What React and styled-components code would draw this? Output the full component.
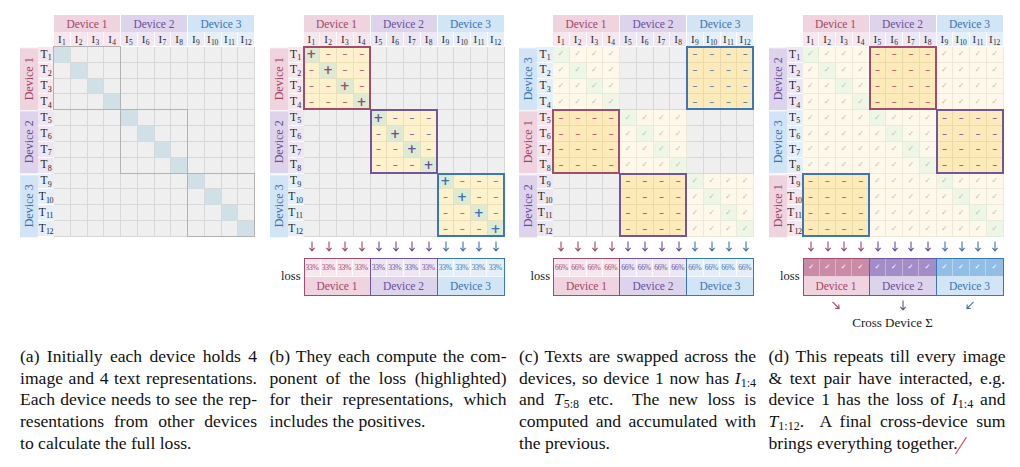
import React from "react";
import styled, { createGlobalStyle } from "styled-components";

const SERIF = `"Liberation Serif", "DejaVu Serif", "Times New Roman", serif`;

const GlobalStyle = createGlobalStyle`
  html, body {
    margin: 0;
    background: #ffffff;
  }
  body {
    font-family: ${SERIF};
    color: #1a1a1a;
  }
`;

// device palette
const DEV = [
  { name: "Device 1", ink: "#a1466a", line: "#a24d6e", head: "#efd3de", soft: "#f7e6ed", strong: "#c98ba6" },
  { name: "Device 2", ink: "#6a4e9c", line: "#71559f", head: "#ddd4ec", soft: "#ece6f5", strong: "#a28dc9" },
  { name: "Device 3", ink: "#3a73b3", line: "#3b76ba", head: "#d2e5f6", soft: "#e4effa", strong: "#92bde5" },
];

const KIND = {
  empty: { bg: "#efefef", line: "#d8d8d8" },
  diag: { bg: "#cfe1e6", line: "#d3dcdf" },
  pos: { bg: "#dcebd2", line: "#e4dfc3" },
  neg: { bg: "#fef2cd", line: "#ebdfb9" },
  dash: { bg: "#fcebb9", line: "#eadaab" },
  check: { bg: "#fdf8ea", line: "#eee8d8" },
  checkDiag: { bg: "#eef6e6", line: "#e3ebda" },
};

const Page = styled.div`
  width: 1020px;
  height: 467px;
  box-sizing: border-box;
  padding: 15px 0 0 20px;
  display: grid;
  grid-template-columns: repeat(4, 235px);
  grid-template-rows: 331px auto;
  column-gap: 14.5px;
  overflow: hidden;
  font-family: ${SERIF};
`;

const Panel = styled.div`
  display: flex;
  flex-direction: column;
  font-family: ${SERIF};
`;

const Matrix = styled.div`
  display: grid;
  grid-template-columns: 18px 16px repeat(12, 16.75px);
  grid-template-rows: 17px 15px repeat(12, 15.83px);
`;

const DevHead = styled.div`
  grid-row: 1;
  grid-column: ${(p) => p.$d * 4 + 3} / span 4;
  background: ${(p) => DEV[p.$d].head};
  color: ${(p) => DEV[p.$d].ink};
  border-right: 1px solid #ffffff;
  font-size: 11.5px;
  display: flex;
  align-items: center;
  justify-content: center;
`;

// label text with a subscript index, kept inline so vertical-align works
const Sym = styled.span`
  white-space: nowrap;
  line-height: 1;

  sub {
    font-size: ${(p) => p.$sub || "7.5px"};
    vertical-align: -2.5px;
    line-height: 0;
    margin-left: 0.5px;
  }
`;

const ILabel = styled.div`
  grid-row: 2;
  grid-column: ${(p) => p.$c + 3};
  background: ${(p) => DEV[p.$d].soft};
  border-right: 1px solid #ffffff;
  border-bottom: 1px solid #ffffff;
  font-size: 11px;
  color: #2c2c2c;
  display: flex;
  align-items: center;
  justify-content: center;
  letter-spacing: -0.2px;
`;

const SideLabel = styled.div`
  grid-column: 1;
  grid-row: ${(p) => p.$rb * 4 + 3} / span 4;
  background: ${(p) => DEV[p.$d].head};
  color: ${(p) => DEV[p.$d].ink};
  border-bottom: 1px solid #ffffff;
  writing-mode: vertical-rl;
  transform: rotate(180deg);
  font-size: 12px;
  display: flex;
  align-items: center;
  justify-content: center;
`;

const TLabel = styled.div`
  grid-column: 2;
  grid-row: ${(p) => p.$r + 3};
  background: ${(p) => DEV[p.$d].soft};
  border-bottom: 1px solid #ffffff;
  font-size: 11.5px;
  color: #1f1f1f;
  display: flex;
  align-items: center;
  justify-content: center;
  letter-spacing: -0.3px;
`;

const Cell = styled.div`
  grid-column: ${(p) => p.$c + 3};
  grid-row: ${(p) => p.$r + 3};
  background: ${(p) => KIND[p.$kind].bg};
  border-right: 1px solid ${(p) => KIND[p.$kind].line};
  border-bottom: 1px solid ${(p) => KIND[p.$kind].line};
  color: ${(p) => p.$ink};
  font-family: "DejaVu Sans", sans-serif;
  font-size: ${(p) => (p.$kind === "pos" ? "12px" : p.$kind.startsWith("check") ? "8px" : "10px")};
  font-weight: ${(p) => (p.$kind === "pos" ? 700 : 400)};
  display: flex;
  align-items: center;
  justify-content: center;
  line-height: 1;
`;

const Outline = styled.div`
  grid-row: ${(p) => p.$rb * 4 + 3} / span 4;
  grid-column: ${(p) => p.$cb * 4 + 3} / span 4;
  border: ${(p) => (p.$thin ? "1px solid #b2b2b2" : `2px solid ${p.$color}`)};
  margin: -1px 0 0 -1px;
  z-index: 1;
  pointer-events: none;
`;

const ArrowRow = styled.div`
  display: grid;
  grid-template-columns: repeat(12, 16.75px);
  margin: 4px 0 0 34px;
  height: 12px;
  justify-items: center;
  align-items: center;
`;

const LossRow = styled.div`
  display: grid;
  grid-template-columns: 34px 201px;
  margin-top: 5px;
`;

const LossLabel = styled.div`
  align-self: center;
  text-align: right;
  padding-right: 3px;
  font-size: 12.5px;
  color: #1a1a1a;
`;

const Bar = styled.div`
  display: grid;
  grid-template-columns: repeat(3, 1fr);
`;

const BarSection = styled.div`
  display: grid;
  grid-template-columns: repeat(4, 1fr);
  grid-template-rows: 18px 18px;
  border: 1px solid ${(p) => DEV[p.$d].line};
  margin-left: ${(p) => (p.$d ? "-1px" : "0")};
`;

const BarCell = styled.div`
  background: ${(p) => (p.$strong ? DEV[p.$d].strong : DEV[p.$d].soft)};
  color: ${(p) => (p.$strong ? "#ffffff" : DEV[p.$d].ink)};
  border-right: 1px solid ${(p) => (p.$strong ? "rgba(255,255,255,0.35)" : "rgba(255,255,255,0.9)")};
  border-bottom: 1px solid rgba(255, 255, 255, 0.6);
  font-size: ${(p) => (p.$strong ? "7px" : "7.6px")};
  font-family: ${(p) => (p.$strong ? '"DejaVu Sans", sans-serif' : SERIF)};
  letter-spacing: -0.3px;
  display: flex;
  align-items: center;
  justify-content: center;
  &:nth-child(4) {
    border-right: none;
  }
`;

const BarName = styled.div`
  grid-column: 1 / -1;
  background: ${(p) => DEV[p.$d].head};
  color: ${(p) => DEV[p.$d].ink};
  font-size: 11.5px;
  display: flex;
  align-items: center;
  justify-content: center;
`;

const SumArrows = styled.div`
  display: grid;
  grid-template-columns: repeat(3, 67px);
  margin: 4px 0 0 34px;
  height: 12px;
  justify-items: center;
  align-items: center;
`;

const SumLabel = styled.div`
  margin: 3px 0 0 34px;
  width: 180px;
  text-align: center;
  font-size: 13px;
  color: #1a1a1a;
`;

const Caption = styled.div`
  width: 237px;
  font-family: ${SERIF};
  font-size: 17.6px;
  line-height: 21.7px;
  color: #111111;
`;

const Line = styled.div`
  text-align: ${(p) => (p.$last ? "left" : "justify")};
  text-align-last: ${(p) => (p.$last ? "left" : "justify")};

  sub {
    font-size: 12px;
    vertical-align: -3px;
    line-height: 0;
  }
`;

const Mark = styled.svg`
  display: inline-block;
  vertical-align: -6px;
  margin-left: -4px;
`;

const Arrow = ({ color, rot = 0 }) => (
  <svg width="8" height="11" viewBox="0 0 8 11" style={{ transform: `rotate(${rot}deg)` }}>
    <path d="M4 0.5 V9.6 M1.4 6.8 L4 9.8 L6.6 6.8" fill="none" stroke={color} strokeWidth="1.1" />
  </svg>
);

const M = ({ v, s }) => (
  <>
    <i>{v}</i>
    <sub>{s}</sub>
  </>
);

const panels = [
  { id: "a", rows: [0, 1, 2] },
  { id: "b", rows: [0, 1, 2], loss: "33%" },
  { id: "c", rows: [2, 0, 1], loss: "66%" },
  { id: "d", rows: [1, 2, 0], loss: "check", sum: true },
];

function cellFor(id, r, c, rows) {
  const rb = Math.floor(r / 4);
  const cb = Math.floor(c / 4);
  if (id === "a") return { kind: r === c ? "diag" : "empty" };
  if (id === "b") {
    if (rb !== cb) return { kind: "empty" };
    return r === c
      ? { kind: "pos", text: "+", ink: DEV[rb].ink }
      : { kind: "neg", text: "–", ink: DEV[rb].ink };
  }
  const own = rows[rb];
  const lineDev = id === "c" ? own : rb;
  if (cb === own) return { kind: "dash", text: "–", ink: DEV[lineDev].ink };
  if (id === "c" && cb !== rb) return { kind: "empty" };
  return { kind: r === c ? "checkDiag" : "check", text: "✓", ink: "#bdbdbd" };
}

function outlinesFor(id, rows) {
  return [0, 1, 2].map((rb) => {
    if (id === "a") return { rb, cb: rb, thin: true };
    if (id === "b") return { rb, cb: rb, color: DEV[rb].line };
    if (id === "c") return { rb, cb: rows[rb], color: DEV[rows[rb]].line };
    return { rb, cb: rows[rb], color: DEV[rb].line };
  });
}

const idx = Array.from({ length: 12 }, (_, i) => i);

const MatrixPanel = ({ panel }) => (
  <Panel>
    <Matrix>
      {[0, 1, 2].map((d) => (
        <DevHead key={d} $d={d}>
          {DEV[d].name}
        </DevHead>
      ))}
      {idx.map((c) => (
        <ILabel key={c} $c={c} $d={Math.floor(c / 4)}>
          <Sym>
            I<sub>{c + 1}</sub>
          </Sym>
        </ILabel>
      ))}
      {panel.rows.map((d, rb) => (
        <SideLabel key={rb} $rb={rb} $d={d}>
          {DEV[d].name}
        </SideLabel>
      ))}
      {idx.map((r) => (
        <TLabel key={r} $r={r} $d={panel.rows[Math.floor(r / 4)]}>
          <Sym $sub="8px">
            T<sub>{r + 1}</sub>
          </Sym>
        </TLabel>
      ))}
      {idx.map((r) =>
        idx.map((c) => {
          const cell = cellFor(panel.id, r, c, panel.rows);
          return (
            <Cell key={`${r}-${c}`} $r={r} $c={c} $kind={cell.kind} $ink={cell.ink}>
              {cell.text}
            </Cell>
          );
        })
      )}
      {outlinesFor(panel.id, panel.rows).map((o) => (
        <Outline key={o.rb} $rb={o.rb} $cb={o.cb} $color={o.color} $thin={o.thin} />
      ))}
    </Matrix>

    {panel.loss && (
      <>
        <ArrowRow>
          {idx.map((c) => (
            <Arrow key={c} color={DEV[Math.floor(c / 4)].ink} />
          ))}
        </ArrowRow>
        <LossRow>
          <LossLabel>loss</LossLabel>
          <Bar>
            {[0, 1, 2].map((d) => (
              <BarSection key={d} $d={d}>
                {[0, 1, 2, 3].map((k) => (
                  <BarCell key={k} $d={d} $strong={panel.loss === "check"}>
                    {panel.loss === "check" ? "✓" : panel.loss}
                  </BarCell>
                ))}
                <BarName $d={d}>{DEV[d].name}</BarName>
              </BarSection>
            ))}
          </Bar>
        </LossRow>
      </>
    )}

    {panel.sum && (
      <>
        <SumArrows>
          <Arrow color={DEV[0].ink} rot={-45} />
          <Arrow color={DEV[1].ink} />
          <Arrow color={DEV[2].ink} rot={45} />
        </SumArrows>
        <SumLabel>Cross Device Σ</SumLabel>
      </>
    )}
  </Panel>
);

const captions = [
  [
    "(a) Initially each device holds 4",
    "image and 4 text representations.",
    "Each device needs to see the rep-",
    "resentations from other devices",
    "to calculate the full loss.",
  ],
  [
    "(b) They each compute the com-",
    "ponent of the loss (highlighted)",
    "for their representations, which",
    "includes the positives.",
  ],
  [
    "(c) Texts are swapped across the",
    <>
      devices, so device 1 now has <M v="I" s="1:4" />
    </>,
    <>
      and <M v="T" s="5:8" /> etc.&nbsp; The new loss is
    </>,
    "computed and accumulated with",
    "the previous.",
  ],
  [
    "(d) This repeats till every image",
    "& text pair have interacted, e.g.",
    <>
      device 1 has the loss of <M v="I" s="1:4" /> and
    </>,
    <>
      <M v="T" s="1:12" />.&nbsp; A final cross-device sum
    </>,
    <>
      brings everything together.
      <Mark width="14" height="20" viewBox="0 0 14 20">
        <path d="M1.5 19 L12.5 2" stroke="#e0505a" strokeWidth="1.3" fill="none" />
      </Mark>
    </>,
  ],
];

export default function App() {
  return (
    <>
      <GlobalStyle />
      <Page>
        {panels.map((p) => (
          <MatrixPanel key={p.id} panel={p} />
        ))}
        {captions.map((lines, i) => (
          <Caption key={i}>
            {lines.map((l, j) => (
              <Line key={j} $last={j === lines.length - 1}>
                {l}
              </Line>
            ))}
          </Caption>
        ))}
      </Page>
    </>
  );
}
